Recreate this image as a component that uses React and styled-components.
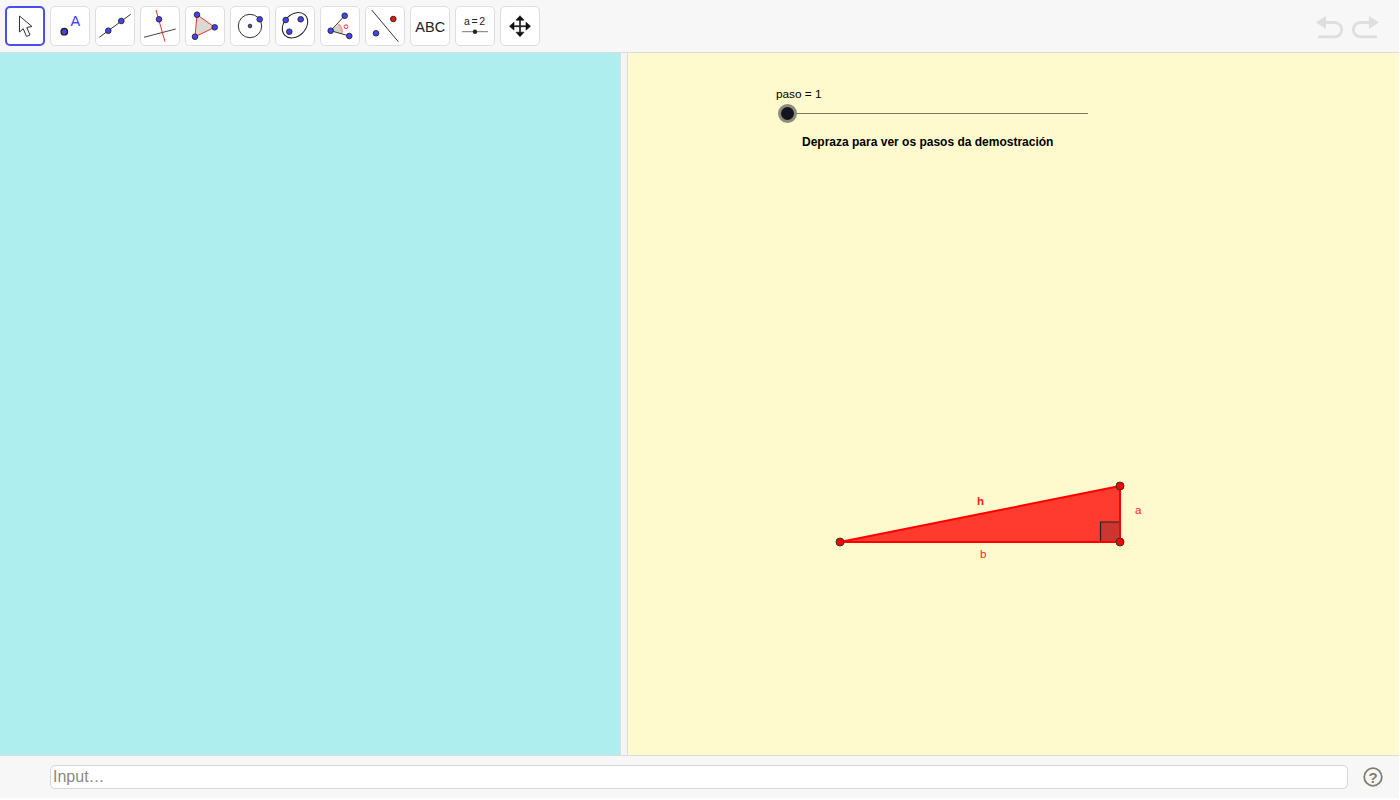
import React from "react";
import styled, { createGlobalStyle } from "styled-components";

const Global = createGlobalStyle`
  html, body { margin: 0; padding: 0; background: #fff; }
  body { font-family: "Liberation Sans", Arial, sans-serif; }
`;

const Page = styled.div`
  width: 1399px;
  height: 798px;
  display: flex;
  flex-direction: column;
  overflow: hidden;
`;

const Toolbar = styled.header`
  height: 52px;
  flex: none;
  box-sizing: content-box;
  background: #f7f7f7;
  border-bottom: 1px solid #dcdcdc;
  display: flex;
  align-items: flex-start;
  justify-content: space-between;
  padding: 0 0 0 5px;
`;

const Tools = styled.div`
  display: flex;
  gap: 5px;
  padding-top: 6px;
`;

const Tool = styled.button`
  width: 40px;
  height: 40px;
  box-sizing: border-box;
  padding: 0;
  background: #fff;
  border: ${(p) => (p.$active ? "2px solid #4a4ff0" : "1px solid #dedede")};
  border-radius: 5px;
  display: flex;
  align-items: center;
  justify-content: center;
`;

const ToolIcon = styled.svg`
  width: 40px;
  height: 40px;
  flex: none;
  display: block;
`;

const History = styled.div`
  display: flex;
  gap: 9px;
  padding: 15px 20px 0 0;
`;

const HistoryIcon = styled.svg`
  width: 27px;
  height: 24px;
  display: block;
`;

const Views = styled.main`
  flex: 1;
  display: flex;
  min-height: 0;
`;

const AlgebraView = styled.section`
  width: 620px;
  flex: none;
  background: #afeeee;
`;

const Divider = styled.div`
  width: 6px;
  flex: none;
  background: #f4f4f4;
  border-left: 1px solid #dcdcdc;
  border-right: 1px solid #dcdcdc;
`;

const GraphicsView = styled.section`
  position: relative;
  flex: 1;
  background: #fffacd;
`;

const SliderLabel = styled.span`
  position: absolute;
  left: 148px;
  top: 34px;
  font-size: 11.8px;
  line-height: 14px;
  color: #000;
  white-space: nowrap;
`;

const SliderTrack = styled.div`
  position: absolute;
  left: 160px;
  top: 60px;
  width: 300px;
  height: 1px;
  background: #77775f;
`;

const SliderKnob = styled.div`
  position: absolute;
  left: 150px;
  top: 51px;
  width: 19px;
  height: 19px;
  box-sizing: border-box;
  border-radius: 50%;
  background: #141420;
  border: 3px solid #8b8b7a;
`;

const Caption = styled.span`
  position: absolute;
  left: 174px;
  top: 82px;
  font-size: 12px;
  line-height: 14px;
  font-weight: 700;
  color: #000;
  white-space: nowrap;
`;

const Drawing = styled.svg`
  position: absolute;
  left: 200px;
  top: 420px;
  width: 330px;
  height: 100px;
  overflow: visible;
`;

const DrawingLabel = styled.text`
  font-family: "Liberation Sans", Arial, sans-serif;
  font-size: 11.5px;
  font-weight: ${(p) => (p.$bold ? 700 : 400)};
  fill: #ff1a1a;
`;

const InputBar = styled.footer`
  height: 42px;
  flex: none;
  background: #f7f7f7;
  border-top: 1px solid #dcdcdc;
  display: flex;
  align-items: center;
  padding: 0 16px 0 50px;
  gap: 15px;
`;

const InputBox = styled.div`
  flex: 1;
  height: 24px;
  box-sizing: border-box;
  background: #fff;
  border: 1px solid #d6d6d6;
  border-radius: 5px;
  padding-left: 2px;
  font-size: 16px;
  line-height: 21px;
  color: #8a8a7a;
  font-family: "Liberation Sans", Arial, sans-serif;
`;

const HelpIcon = styled.svg`
  width: 20px;
  height: 20px;
  flex: none;
  display: block;
`;

const Dot = ({ x, y, r = 2.8, fill = "#4444f5" }) => (
  <circle cx={x} cy={y} r={r} fill={fill} stroke="#222" strokeWidth="0.9" />
);

const icons = [
  <path key="m" d="M14.5 10 L14.5 26 L18.2 22.7 L21.5 30.5 L25 29 L21.8 21.5 L27 20.5 Z" fill="#fff" stroke="#333" strokeWidth="1" strokeLinejoin="miter" />,
  <g key="a">
    <circle cx="14.3" cy="25.7" r="3.2" fill="#4444f5" stroke="#222" strokeWidth="1.4" />
    <text x="20.4" y="19.5" fontFamily="Liberation Sans" fontSize="14.5" fill="#4444f5" stroke="#4444f5" strokeWidth="0.1">A</text>
  </g>,
  <g key="l">
    <line x1="4.3" y1="31.3" x2="35.7" y2="8.3" stroke="#333" strokeWidth="1" />
    <Dot x={13.3} y={24.7} /><Dot x={26.3} y={15} />
  </g>,
  <g key="p">
    <line x1="16" y1="4" x2="25" y2="35.7" stroke="#f03030" strokeWidth="1" />
    <line x1="4" y1="31.3" x2="35.7" y2="23" stroke="#444" strokeWidth="1" />
    <Dot x={19} y={13.3} />
  </g>,
  <g key="t">
    <polygon points="12,8.7 29.7,21.3 10,30.7" fill="#dbdad2" stroke="#f03030" strokeWidth="1" />
    <Dot x={12} y={8.7} /><Dot x={29.7} y={21.3} /><Dot x={10} y={30.7} />
  </g>,
  <g key="c">
    <circle cx="20" cy="20" r="11.7" fill="none" stroke="#333" strokeWidth="1" />
    <Dot x={20} y={20} r={1.8} fill="#5558b0" /><Dot x={29.7} y={13.3} />
  </g>,
  <g key="e">
    <ellipse cx="20" cy="19.3" rx="14.3" ry="10.8" transform="rotate(-45 20 19.3)" fill="none" stroke="#222" strokeWidth="1" />
    <Dot x={10.7} y={14} /><Dot x={25.7} y={13.3} /><Dot x={14.3} y={25.7} />
  </g>,
  <g key="g">
    <path d="M10.7 24.7 L18.3 18 A10 10 0 0 1 21.7 27.3 Z" fill="#d6d2cc" />
    <path d="M18.3 18 A10 10 0 0 1 21.7 27.3" fill="none" stroke="#f5a0a0" strokeWidth="2" />
    <line x1="10.7" y1="24.7" x2="24.7" y2="9.7" stroke="#333" strokeWidth="1" />
    <line x1="10.7" y1="24.7" x2="29.3" y2="30" stroke="#333" strokeWidth="1" />
    <circle cx="26" cy="20.7" r="1.9" fill="none" stroke="#f03030" strokeWidth="1" />
    <Dot x={10.7} y={24.7} /><Dot x={24.7} y={9.7} /><Dot x={29.3} y={30} />
  </g>,
  <g key="r">
    <line x1="6.7" y1="4" x2="33.3" y2="35.7" stroke="#333" strokeWidth="1" />
    <Dot x={11} y={27.3} /><Dot x={28.3} y={13} fill="#ee1111" />
  </g>,
  <text key="abc" x="5.3" y="26" fontFamily="Liberation Sans" fontSize="14.5" fill="#222">ABC</text>,
  <g key="s">
    <text x="9" y="19" fontFamily="Liberation Sans" fontSize="10.5" letterSpacing="1.7" fill="#222">a=2</text>
    <line x1="7" y1="25.7" x2="33" y2="25.7" stroke="#777" strokeWidth="1" />
    <circle cx="20" cy="25.7" r="2.2" fill="#222" />
  </g>,
  <path key="mv" fill="#111" stroke="#111" strokeWidth="0.6" strokeLinejoin="round" d="M20 9.7 L24 14.2 L20.5 14.2 L20.5 19.7 L26 19.7 L26 16.2 L30.5 20.2 L26 24.2 L26 20.7 L20.5 20.7 L20.5 26.2 L24 26.2 L20 30.7 L16 26.2 L19.5 26.2 L19.5 20.7 L14 20.7 L14 24.2 L9.5 20.2 L14 16.2 L14 19.7 L19.5 19.7 L19.5 14.2 L16 14.2 Z" />,
];

export default function App() {
  return (
    <Page>
      <Global />
      <Toolbar>
        <Tools>
          {icons.map((icon, i) => (
            <Tool key={i} $active={i === 0}>
              <ToolIcon viewBox="0 0 40 40">{icon}</ToolIcon>
            </Tool>
          ))}
        </Tools>
        <History>
          <HistoryIcon viewBox="0 0 27 24">
            <path d="M10 1 L0 7.5 L10 14 Z" fill="#dedede" />
            <path d="M8 7.5 H18.5 A7 7 0 0 1 18.5 21.8 H2" fill="none" stroke="#dedede" strokeWidth="2.8" />
          </HistoryIcon>
          <HistoryIcon viewBox="0 0 27 24">
            <path d="M17 1 L27 7.5 L17 14 Z" fill="#dedede" />
            <path d="M19 7.5 H8.5 A7 7 0 0 0 8.5 21.8 H25" fill="none" stroke="#dedede" strokeWidth="2.8" />
          </HistoryIcon>
        </History>
      </Toolbar>
      <Views>
        <AlgebraView />
        <Divider />
        <GraphicsView>
          <SliderLabel>paso = 1</SliderLabel>
          <SliderTrack />
          <SliderKnob />
          <Caption>Depraza para ver os pasos da demostración</Caption>
          <Drawing viewBox="0 0 330 100">
            <polygon points="12,69 292,13 292,69" fill="#ff3b30" stroke="#ff0000" strokeWidth="2" />
            <rect x="272.5" y="49" width="18.5" height="19" fill="#cc3630" />
            <path d="M272.5 68 V49 H291" fill="none" stroke="#222" strokeWidth="1.2" />
            <circle cx="12" cy="69" r="4" fill="#ff0000" stroke="#333" strokeWidth="1" />
            <circle cx="292" cy="69" r="4" fill="#ff0000" stroke="#333" strokeWidth="1" />
            <circle cx="292" cy="13" r="4" fill="#ff0000" stroke="#333" strokeWidth="1" />
            <DrawingLabel $bold x="149" y="32">h</DrawingLabel>
            <DrawingLabel x="152" y="85">b</DrawingLabel>
            <DrawingLabel x="307" y="40.5">a</DrawingLabel>
          </Drawing>
        </GraphicsView>
      </Views>
      <InputBar>
        <InputBox>Input…</InputBox>
        <HelpIcon viewBox="0 0 20 20">
          <circle cx="10" cy="10" r="8.8" fill="none" stroke="#7f7f70" strokeWidth="1.8" />
          <text x="10" y="15.5" textAnchor="middle" fontFamily="Liberation Sans" fontWeight="700" fontSize="15" fill="#7f7f70">?</text>
        </HelpIcon>
      </InputBar>
    </Page>
  );
}
